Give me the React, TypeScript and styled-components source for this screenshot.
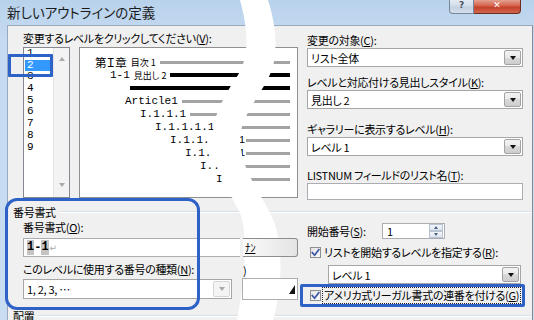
import React from 'react'
import styled, { createGlobalStyle } from 'styled-components'

const GlobalStyle = createGlobalStyle`
  html, body { margin: 0; padding: 0; background: #fff; }
  body {
    font-family: "Noto Sans CJK JP", "Noto Sans", sans-serif;
    font-size: 11px;
    letter-spacing: -0.3px;
    font-feature-settings: "palt";
    color: #000;
  }
  * { box-sizing: border-box; }
`

const ACCENT = '#2e62c7'

export default function App() {
  return (
    <>
      <GlobalStyle />
      <Shell>
        <TitleBar>
          <Title>新しいアウトラインの定義</Title>
          <WinButtons>
            <WinButton>?</WinButton>
            <WinButton $close>✕</WinButton>
          </WinButtons>
        </TitleBar>
        <Client>
          <Upper>
            <LeftCol>
              <Label>変更するレベルをクリックしてください(<u>V</u>):</Label>
              <PickRow>
                <LevelList>
                  <LevelItems>
                    {[1, 2, 3, 4, 5, 6, 7, 8, 9].map(n => (
                      <LevelItem key={n} $selected={n === 2}>{n}</LevelItem>
                    ))}
                  </LevelItems>
                  <ScrollTrack>
                    <ScrollArrow />
                    <ScrollArrow $down />
                  </ScrollTrack>
                </LevelList>
                <Preview>
                  <PreviewRow $indent={15}>
                    <BigText>第Ｉ章</BigText>
                    <SubText>目次 1</SubText>
                    <Bar />
                  </PreviewRow>
                  <PreviewRow $indent={30}>
                    <MonoText>1-1</MonoText>
                    <SubText>見出し 2</SubText>
                    <Bar $dark />
                  </PreviewRow>
                  <PreviewRow $indent={49}>
                    <Bar $dark $flush />
                  </PreviewRow>
                  <PreviewRow $indent={45}>
                    <MonoText>Article1</MonoText>
                    <Bar />
                  </PreviewRow>
                  <PreviewRow $indent={60}>
                    <MonoText>I.1.1.1</MonoText>
                    <Bar />
                  </PreviewRow>
                  <PreviewRow $indent={75}>
                    <MonoText>I.1.1.1.1</MonoText>
                    <Bar />
                  </PreviewRow>
                  <PreviewRow $indent={90}>
                    <MonoText>I.1.1.</MonoText>
                    <MonoText $gap={29}>1</MonoText>
                    <Bar $flush />
                  </PreviewRow>
                  <PreviewRow $indent={105}>
                    <MonoText>I.1.</MonoText>
                    <MonoText $gap={27}>1</MonoText>
                    <Bar $flush />
                  </PreviewRow>
                  <PreviewRow $indent={120}>
                    <MonoText>I..</MonoText>
                    <Bar />
                  </PreviewRow>
                  <PreviewRow $indent={136}>
                    <MonoText>I</MonoText>
                    <Bar />
                  </PreviewRow>
                </Preview>
              </PickRow>
            </LeftCol>
            <RightCol>
              <Field $mt={0}>
                <Label>変更の対象(<u>C</u>):</Label>
                <Combo>
                  <ComboText>リスト全体</ComboText>
                  <DropButton />
                </Combo>
              </Field>
              <Field $mt={8}>
                <Label>レベルと対応付ける見出しスタイル(<u>K</u>):</Label>
                <Combo>
                  <ComboText>見出し 2</ComboText>
                  <DropButton />
                </Combo>
              </Field>
              <Field $mt={13}>
                <Label>ギャラリーに表示するレベル(<u>H</u>):</Label>
                <Combo>
                  <ComboText>レベル 1</ComboText>
                  <DropButton />
                </Combo>
              </Field>
              <Field $mt={12}>
                <Label>LISTNUM フィールドのリスト名(<u>T</u>):</Label>
                <EditBox />
              </Field>
            </RightCol>
          </Upper>

          <GroupHead $mt={5}>
            <span>番号書式</span>
            <Rule />
          </GroupHead>

          <Lower>
            <NumberCol>
              <Label>番号書式(<u>O</u>):</Label>
              <FormatEdit>
                <Shade>1</Shade>-<Shade>1</Shade>
                <ReturnMark>↵</ReturnMark>
              </FormatEdit>
              <Label $mt={5}>このレベルに使用する番号の種類(<u>N</u>):</Label>
              <Combo $mt={3} $h={20} $w={209}>
                <ComboText>1, 2, 3, …</ComboText>
                <DropButton $disabled />
              </Combo>
            </NumberCol>

            <MidCol>
              <CutButton><u>ﾅﾝ</u></CutButton>
              <CutLabel>)</CutLabel>
              <CutBox>
                <svg width="7" height="9" viewBox="0 0 7 9">
                  <polygon points="6,0 6,9 0,9" fill="#111" />
                </svg>
              </CutBox>
            </MidCol>

            <StartCol>
              <StartRow>
                <Label>開始番号(<u>S</u>):</Label>
                <SpinBox>
                  <span>1</span>
                  <SpinButtons>
                    <SpinHalf><SpinArrow /></SpinHalf>
                    <SpinHalf><SpinArrow $down /></SpinHalf>
                  </SpinButtons>
                </SpinBox>
              </StartRow>
              <CheckRow $mt={6}>
                <CheckBox><CheckMark /></CheckBox>
                <span>リストを開始するレベルを指定する(<u>R</u>):</span>
              </CheckRow>
              <Combo $mt={6} $indent={21} $w={193}>
                <ComboText>レベル 1</ComboText>
                <DropButton />
              </Combo>
              <CheckRow $mt={4}>
                <CheckBox><CheckMark /></CheckBox>
                <FocusText>アメリカ式リーガル書式の連番を付ける(<u>G</u>)</FocusText>
              </CheckRow>
            </StartCol>
          </Lower>

          <GroupHead $mt={7}>
            <span>配置</span>
            <Rule />
          </GroupHead>
        </Client>

        <Band width="534" height="320" viewBox="0 0 534 320">
          <path
            d="M240 0 C248 30 250 55 238 75 C225 95 212 115 213 140 C214 165 228 190 240 213 C248 232 245 280 237 320
               L273 320 C282 290 285 240 270 213 C258 190 240 165 240 140 C240 115 262 95 272 70 C278 50 276 25 268 0 Z"
            fill="#ffffff"
          />
        </Band>

        <Marker $x={8} $y={54} $w={45} $h={23} $r={1} />
        <Marker $x={5} $y={198} $w={195} $h={112} $r={12} />
        <Marker $x={300} $y={284} $w={225} $h={23} $r={2} />
      </Shell>
    </>
  )
}

function CheckMark() {
  return (
    <svg width="9" height="9" viewBox="0 0 9 9">
      <path d="M1.3 4.6 L3.6 7.2 L7.8 1.6" stroke="#3a55a4" strokeWidth="1.7" fill="none" strokeLinecap="square" />
    </svg>
  )
}

const Shell = styled.div`
  position: relative;
  width: 534px;
  height: 320px;
  overflow: hidden;
  background: linear-gradient(#b9d2ec, #c5dbf1 40px, #c8ddf2);
`

const TitleBar = styled.div`
  height: 25px;
  display: flex;
  align-items: flex-start;
  padding-left: 7px;
`

const Title = styled.div`
  font-size: 13.5px;
  letter-spacing: 0;
  line-height: 25px;
  color: #1a1a1a;
`

const WinButtons = styled.div`
  margin-left: auto;
  margin-right: 13px;
  display: flex;
`

const WinButton = styled.div<{ $close?: boolean }>`
  width: ${p => (p.$close ? 47 : 25)}px;
  height: 14px;
  border: 1px solid ${p => (p.$close ? '#6e2b1f' : '#76879b')};
  border-top: none;
  border-left: ${p => (p.$close ? 'none' : '')};
  border-radius: ${p => (p.$close ? '0 0 4px 0' : '0 0 0 4px')};
  background: ${p =>
    p.$close
      ? 'linear-gradient(#e4a090, #d4624c 45%, #c4402a 55%, #d0654e)'
      : 'linear-gradient(#e3ebf4, #d2dde9 45%, #c2d0df 55%, #d5e0ec)'};
  color: ${p => (p.$close ? '#fff' : '#4b5563')};
  font-family: "DejaVu Sans", sans-serif;
  font-size: 9px;
  font-weight: bold;
  letter-spacing: 0;
  line-height: 11px;
  text-align: center;
`

const Client = styled.div`
  margin-left: 7px;
  width: 526px;
  height: 295px;
  background: #f0f0f0;
  border-left: 1px solid #99aabf;
  border-top: 1px solid #99aabf;
  border-right: 1px solid #858b94;
`

const Upper = styled.div`
  display: grid;
  grid-template-columns: 275px 216px;
  column-gap: 9px;
  padding-left: 15px;
`

const LeftCol = styled.div`
  padding-top: 5px;
`

const RightCol = styled.div`
  padding-top: 7px;
`

const Label = styled.div<{ $mt?: number }>`
  line-height: 14px;
  white-space: nowrap;
  margin-top: ${p => p.$mt ?? 0}px;
`

const PickRow = styled.div`
  margin-top: 2px;
  display: flex;
  gap: 9px;
`

const LevelList = styled.div`
  width: 47px;
  height: 151px;
  border: 1px solid #828790;
  background: #fff;
  display: flex;
`

const LevelItems = styled.div`
  width: 29px;
  padding: 0 1px;
`

const LevelItem = styled.div<{ $selected?: boolean }>`
  height: 11.7px;
  line-height: 11.7px;
  padding-left: 2px;
  font-family: "Liberation Mono", monospace;
  font-size: 11px;
  letter-spacing: 0;
  background: ${p => (p.$selected ? '#3399ff' : 'transparent')};
  color: ${p => (p.$selected ? '#fff' : '#000')};
`

const ScrollTrack = styled.div`
  width: 16px;
  background: #f3f3f3;
  border-left: 1px solid #e3e3e3;
  display: flex;
  flex-direction: column;
  justify-content: space-between;
  align-items: center;
  padding: 9px 0 10px;
`

const ScrollArrow = styled.div<{ $down?: boolean }>`
  width: 0;
  height: 0;
  border-left: 3.5px solid transparent;
  border-right: 3.5px solid transparent;
  ${p => (p.$down ? 'border-top' : 'border-bottom')}: 4px solid #a9a9a9;
`

const Preview = styled.div`
  width: 219px;
  height: 151px;
  border: 1px solid #8f8f8f;
  background: #fff;
  padding: 7.5px 7px 0 0;
`

const PreviewRow = styled.div<{ $indent: number }>`
  height: 13.1px;
  display: flex;
  align-items: center;
  padding-left: ${p => p.$indent}px;
  white-space: nowrap;
  letter-spacing: 0;
`

const BigText = styled.span`
  font-size: 11.5px;
  line-height: 13px;
`

const SubText = styled.span`
  font-size: 9px;
  line-height: 13px;
  margin-left: 4px;
`

const MonoText = styled.span<{ $gap?: number }>`
  font-family: "Liberation Mono", monospace;
  font-size: 11px;
  line-height: 13px;
  margin-left: ${p => p.$gap ?? 0}px;
`

const Bar = styled.div<{ $dark?: boolean; $flush?: boolean }>`
  flex: 1;
  height: ${p => (p.$dark ? 4 : 3)}px;
  margin-left: ${p => (p.$flush ? 1 : 4)}px;
  background: ${p => (p.$dark ? '#000' : '#a3a3a3')};
`

const Field = styled.div<{ $mt: number }>`
  margin-top: ${p => p.$mt}px;
  display: flex;
  flex-direction: column;
  gap: 1px;
`

const Combo = styled.div<{ $mt?: number; $h?: number; $w?: number; $indent?: number }>`
  margin-top: ${p => p.$mt ?? 0}px;
  margin-left: ${p => p.$indent ?? 0}px;
  width: ${p => (p.$w ? `${p.$w}px` : '100%')};
  height: ${p => p.$h ?? 19}px;
  border: 1px solid #a6a6a6;
  background: #fff;
  display: flex;
  align-items: stretch;
`

const ComboText = styled.div`
  flex: 1;
  padding-left: 3px;
  display: flex;
  align-items: center;
  white-space: nowrap;
`

const DropButton = styled.div<{ $disabled?: boolean }>`
  width: 17px;
  margin: 1px;
  border: 1px solid ${p => (p.$disabled ? '#d6d6d6' : '#a3a3a3')};
  border-radius: 2px;
  background: ${p =>
    p.$disabled
      ? '#f4f4f4'
      : 'linear-gradient(#f3f3f3, #e9e9e9 50%, #d9d9d9 50%, #cdcdcd)'};
  display: flex;
  align-items: center;
  justify-content: center;

  &::after {
    content: '';
    border-left: 3.5px solid transparent;
    border-right: 3.5px solid transparent;
    border-top: 4px solid ${p => (p.$disabled ? '#a8a8a8' : '#111')};
  }
`

const EditBox = styled.div`
  height: 17px;
  border: 1px solid #abadb3;
  background: #fff;
`

const GroupHead = styled.div<{ $mt: number }>`
  margin-top: ${p => p.$mt}px;
  padding-left: 5px;
  height: 14px;
  line-height: 14px;
  display: flex;
  align-items: center;
`

const Rule = styled.div`
  flex: 1;
  margin: 0 1px 0 4px;
  height: 2px;
  border-top: 1px solid #d5dfe5;
  border-bottom: 1px solid #fff;
`

const Lower = styled.div`
  display: grid;
  grid-template-columns: 217px 56px 216px;
  column-gap: 2px;
  padding-left: 15px;
  & > :last-child { margin-left: 7px; }
`

const NumberCol = styled.div`
  padding-top: 1px;
`

const FormatEdit = styled.div`
  margin-top: 4px;
  height: 19px;
  border: 1px solid #abadb3;
  border-right: none;
  background: #fff;
  display: flex;
  align-items: center;
  padding-left: 3px;
  font-family: "Liberation Mono", monospace;
  font-size: 12px;
  font-weight: bold;
  letter-spacing: 0;
`

const Shade = styled.span`
  background: #c4c4c4;
  line-height: 15px;
`

const ReturnMark = styled.span`
  color: #a8a8a8;
  font-family: "DejaVu Sans", sans-serif;
  font-weight: normal;
  font-size: 9px;
  margin-left: 1px;
`

const MidCol = styled.div`
  position: relative;
  z-index: 4;
  padding-top: 19px;
`

const CutButton = styled.div`
  margin-left: 1px;
  height: 19px;
  border: 1px solid #8c8c8c;
  border-left: none;
  border-radius: 0 3px 3px 0;
  background: linear-gradient(90deg, #fbfbfb, #f1f1f1 40%, #e4e4e4);
  padding-left: 2px;
  line-height: 17px;
`

const CutLabel = styled.div`
  margin-top: 6px;
  line-height: 14px;
  padding-left: 1px;
`

const CutBox = styled.div`
  margin-top: 1px;
  height: 22px;
  border: 1px solid #abadb3;
  background: #fff;
  display: flex;
  align-items: center;
  justify-content: flex-end;
  padding-right: 1px;
`

const StartCol = styled.div`
  padding-top: 4px;
`

const StartRow = styled.div`
  height: 16px;
  display: grid;
  grid-template-columns: 75px 63px;
  align-items: center;
`

const SpinBox = styled.div`
  height: 16px;
  border: 1px solid #abadb3;
  background: #fff;
  display: flex;
  align-items: center;
  justify-content: space-between;
  padding-left: 4px;
  line-height: 14px;
`

const SpinButtons = styled.div`
  width: 14px;
  height: 14px;
  margin-right: 1px;
  display: flex;
  flex-direction: column;
`

const SpinHalf = styled.div`
  flex: 1;
  border: 1px solid #b9c3d1;
  background: linear-gradient(#f3f6fa, #dde5ef);
  display: flex;
  align-items: center;
  justify-content: center;
`

const SpinArrow = styled.div<{ $down?: boolean }>`
  border-left: 2.5px solid transparent;
  border-right: 2.5px solid transparent;
  ${p => (p.$down ? 'border-top' : 'border-bottom')}: 3px solid #4d6185;
`

const CheckRow = styled.div<{ $mt: number }>`
  margin-top: ${p => p.$mt}px;
  height: 14px;
  display: flex;
  align-items: center;
  gap: 3px;
  padding-left: 3px;
  white-space: nowrap;
`

const CheckBox = styled.div`
  width: 11px;
  height: 11px;
  border: 1px solid #8e8f8f;
  background: linear-gradient(135deg, #e3e3e3, #fbfbfb);
  display: flex;
  align-items: center;
  justify-content: center;
`

const FocusText = styled.span`
  outline: 1px dotted #222;
  outline-offset: 1px;
  line-height: 13px;
`

const Band = styled.svg`
  position: absolute;
  left: 0;
  top: 0;
  z-index: 3;
  pointer-events: none;
`

const Marker = styled.div<{ $x: number; $y: number; $w: number; $h: number; $r: number }>`
  position: absolute;
  z-index: 5;
  left: ${p => p.$x}px;
  top: ${p => p.$y}px;
  width: ${p => p.$w}px;
  height: ${p => p.$h}px;
  border: 3px solid ${ACCENT};
  border-radius: ${p => p.$r}px;
  pointer-events: none;
`
